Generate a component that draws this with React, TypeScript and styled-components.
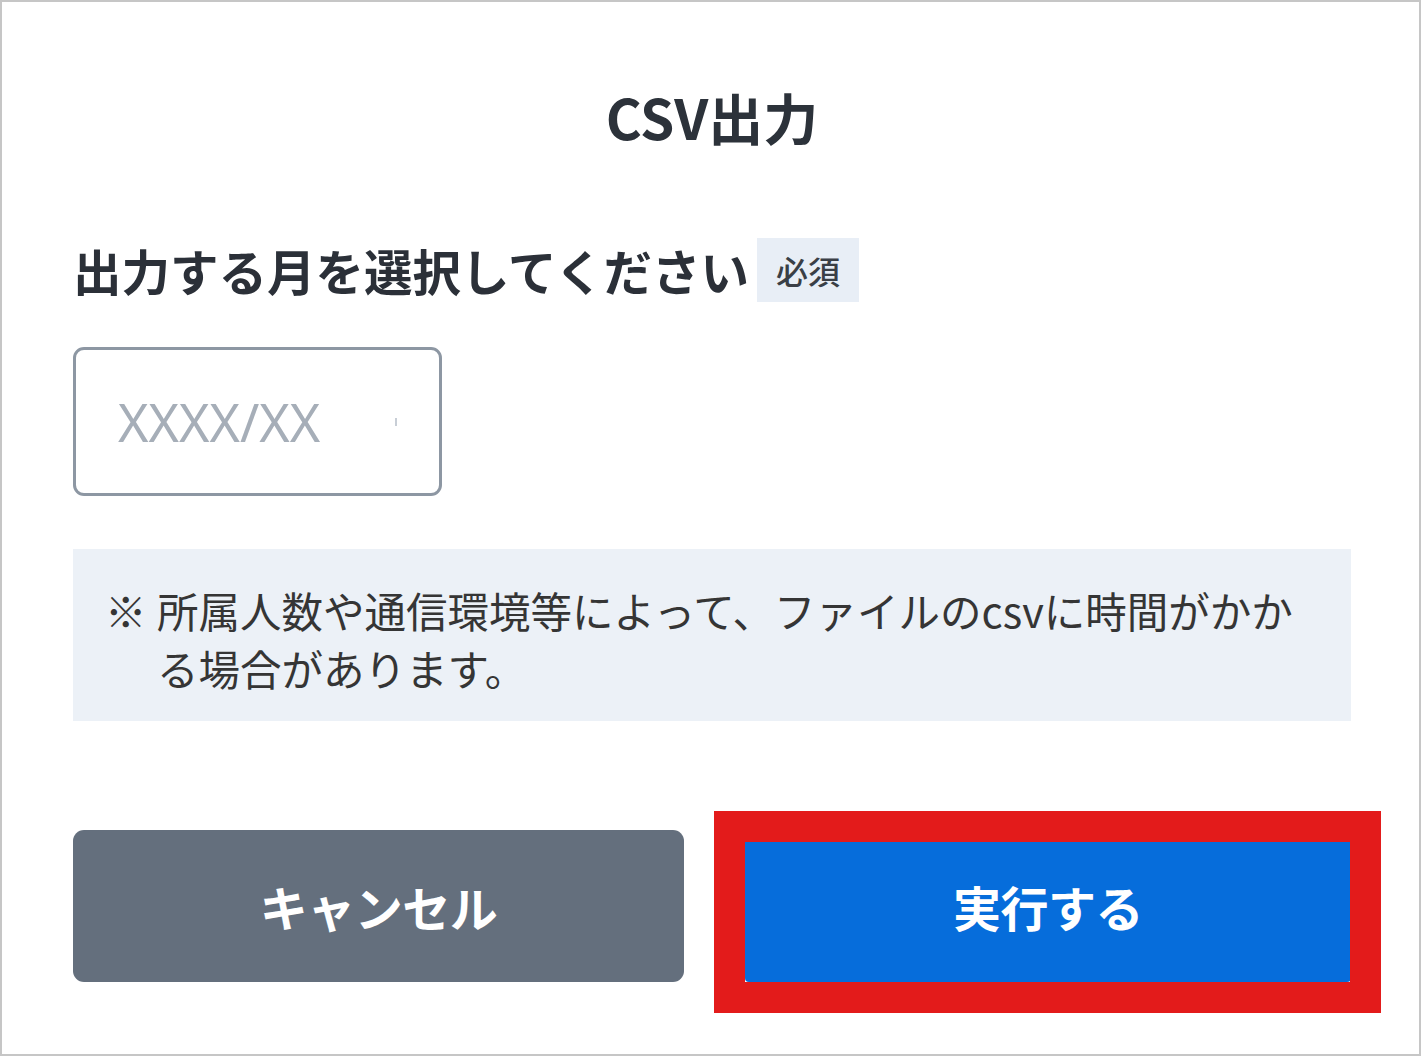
import styled, { createGlobalStyle } from "styled-components";

const GlobalStyle = createGlobalStyle`
  html, body {
    margin: 0;
    padding: 0;
    background: #ffffff;
  }
  body {
    font-family: "Noto Sans CJK JP", "Noto Sans", sans-serif;
  }
`;

const Dialog = styled.div`
  width: 1421px;
  height: 1056px;
  box-sizing: border-box;
  border: 2px solid #c6c6c6;
  padding: 77px 68px 0 71px;
  display: flex;
  flex-direction: column;
  background: #ffffff;
`;

const Title = styled.h2`
  margin: 0;
  height: 75px;
  line-height: 75px;
  text-align: center;
  font-size: 55px;
  font-weight: 700;
  color: #2c323a;
`;

const LabelRow = styled.div`
  margin-top: 84px;
  height: 64px;
  display: flex;
  align-items: center;
  gap: 8px;
`;

const Label = styled.span`
  font-size: 48.5px;
  font-weight: 700;
  line-height: 64px;
  color: #2b3038;
`;

const RequiredBadge = styled.span`
  height: 64px;
  padding: 0 19px;
  display: flex;
  align-items: center;
  background: #e8eef6;
  font-size: 32px;
  font-weight: 500;
  color: #3a3f46;
`;

const MonthInput = styled.div`
  margin-top: 45px;
  width: 369px;
  height: 149px;
  box-sizing: border-box;
  border: 3px solid #8d97a3;
  border-radius: 11px;
  display: flex;
  align-items: center;
  padding-left: 42px;
`;

const Placeholder = styled.span`
  font-family: "Noto Sans", sans-serif;
  font-size: 52px;
  font-weight: 400;
  color: #a6aeb8;
`;

const Caret = styled.span`
  margin-left: auto;
  margin-right: 42px;
  width: 2px;
  height: 8px;
  background: #c8ced6;
`;

const Notice = styled.div`
  margin-top: 53px;
  height: 172px;
  box-sizing: border-box;
  padding: 32px 40px 22px 32px;
  background: #ecf1f7;
  display: flex;
  font-size: 41.5px;
  line-height: 58px;
  color: #353535;
`;

const NoticeMark = styled.span`
  flex: 0 0 auto;
  width: 52px;
`;

const NoticeText = styled.span`
  flex: 1;
`;

const ButtonRow = styled.div`
  margin-top: 109px;
  display: grid;
  grid-template-columns: 611px 1fr;
  gap: 61px;
  height: 152px;
`;

const Button = styled.button<{ $primary?: boolean }>`
  position: relative;
  border: none;
  border-radius: ${({ $primary }) => ($primary ? "4px" : "11px")};
  background: ${({ $primary }) => ($primary ? "#066ddb" : "#646f7d")};
  color: #ffffff;
  font-family: "Noto Sans CJK JP", "Noto Sans", sans-serif;
  font-size: 48px;
  font-weight: 700;
  letter-spacing: -0.5px;
  cursor: pointer;
  padding: 0;
`;

/* red annotation frame drawn over the primary button */
const Highlight = styled.span`
  position: absolute;
  top: -19px;
  bottom: -31px;
  left: -31px;
  right: -30px;
  border: 31px solid #e31b1b;
  pointer-events: none;
`;

export default function App() {
  return (
    <>
      <GlobalStyle />
      <Dialog>
        <Title>CSV出力</Title>
        <LabelRow>
          <Label>出力する月を選択してください</Label>
          <RequiredBadge>必須</RequiredBadge>
        </LabelRow>
        <MonthInput>
          <Placeholder>XXXX/XX</Placeholder>
          <Caret />
        </MonthInput>
        <Notice>
          <NoticeMark>※</NoticeMark>
          <NoticeText>
            所属人数や通信環境等によって、ファイルのcsvに時間がかかる場合があります。
          </NoticeText>
        </Notice>
        <ButtonRow>
          <Button>キャンセル</Button>
          <Button $primary>
            実行する
            <Highlight />
          </Button>
        </ButtonRow>
      </Dialog>
    </>
  );
}
